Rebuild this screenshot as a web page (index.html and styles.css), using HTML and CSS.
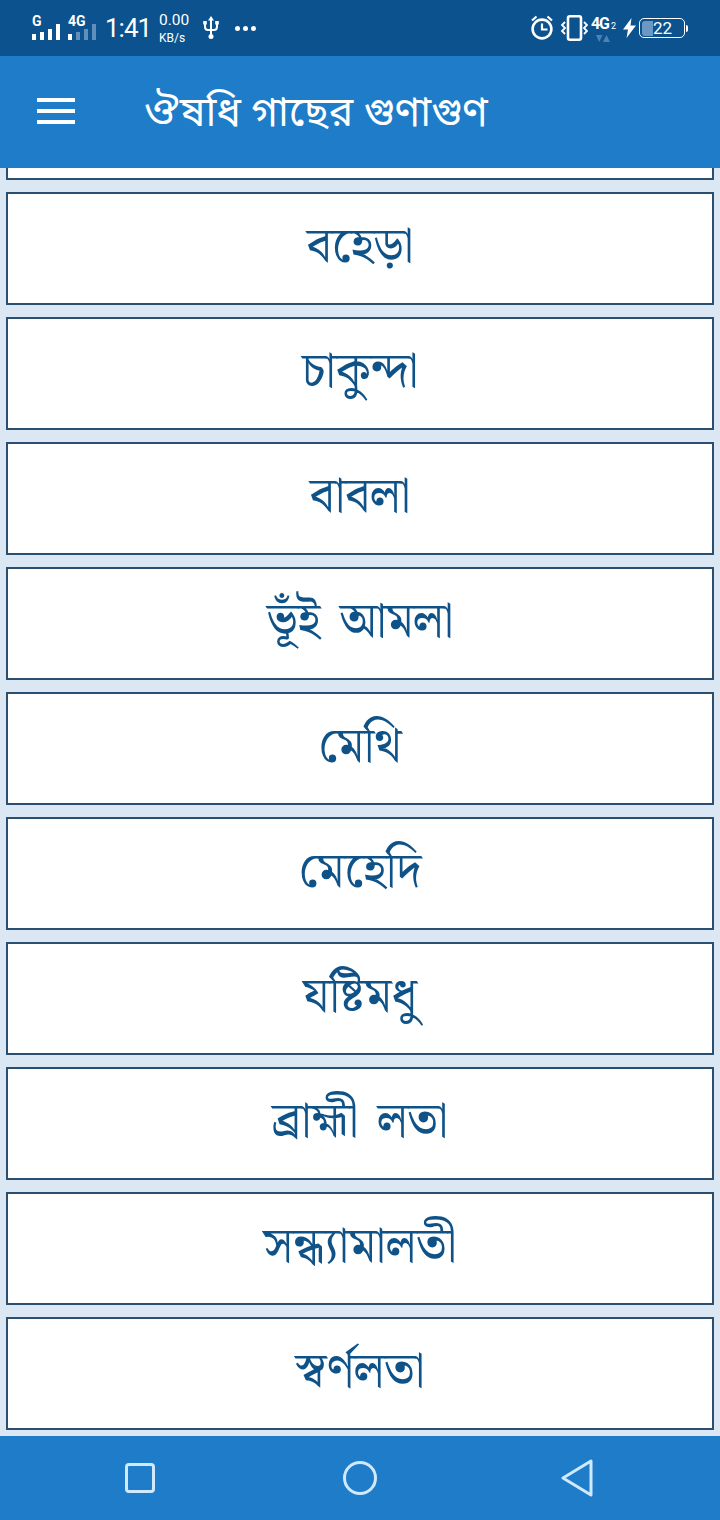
FILE: index.html
```html
<!DOCTYPE html>
<html lang="bn">
<head>
<meta charset="utf-8">
<title>ঔষধি গাছের গুণাগুণ</title>
<link rel="stylesheet" href="styles.css">
</head>
<body>
<div class="app">
  <header class="status">
    <div class="status-left">
      <div class="sim">
        <span class="net">G</span>
        <div class="bars"><i class="b1"></i><i class="b2"></i><i class="b3"></i><i class="b4"></i></div>
      </div>
      <div class="sim">
        <span class="net">4G</span>
        <div class="bars"><i class="b1"></i><i class="b2 dim"></i><i class="b3 dim"></i><i class="b4 dim"></i></div>
      </div>
      <span class="clock">1:41</span>
      <div class="speed"><span class="speed-val">0.00</span><span class="speed-unit">KB/s</span></div>
      <svg class="usb" width="18" height="24" viewBox="0 0 18 24" fill="none" stroke="#fff" stroke-width="2">
        <path d="M9 3v17M3 8v2.500q0 3.500 3 3.500h6q3 0 3-3.500V8"/>
        <path d="M9 0l3 4.500H6z" fill="#fff" stroke="none"/>
        <circle cx="9" cy="20.500" r="2.500" fill="#fff" stroke="none"/>
        <rect x="1.200" y="5" width="3.600" height="3.500" fill="#fff" stroke="none"/>
        <rect x="13.200" y="5" width="3.600" height="3.500" fill="#fff" stroke="none"/>
      </svg>
      <div class="dots"><i></i><i></i><i></i></div>
    </div>
    <div class="status-right">
      <svg class="alarm" width="26" height="26" viewBox="0 0 26 26" fill="none" stroke="#fff" stroke-width="2.600">
        <circle cx="13" cy="14" r="9.400"/>
        <path d="M13 8.500v6h5.500" stroke-width="2.200"/>
        <path d="M3 5.500L7.500 1.500M23 5.500L18.500 1.500" stroke-width="2.200"/>
      </svg>
      <svg class="vibrate" width="28" height="26" viewBox="0 0 28 26" fill="none" stroke="#fff" stroke-width="2.600">
        <rect x="8" y="1.300" width="13" height="23.400" rx="2"/>
        <path d="M5 7L2 10l3 3-3 3 3 3M24 7l3 3-3 3 3 3-3 3" stroke-width="1.800"/>
      </svg>
      <div class="net2">
        <span class="net2-label">4G<small>2</small></span>
        <svg width="14" height="7" viewBox="0 0 14 7"><path d="M0 0h6.500L3.200 7z" fill="#4f82b2"/><path d="M7 7h7L10.500 0z" fill="#4f82b2"/></svg>
      </div>
      <svg class="bolt" width="13" height="20" viewBox="0 0 13 20"><path d="M8.500 0L0 11.500h5L3.500 20 13 7.500H7.500z" fill="#fff"/></svg>
      <div class="battery">
        <div class="battery-body"><i class="battery-fill"></i><span class="battery-num">22</span></div>
        <i class="battery-tip"></i>
      </div>
    </div>
  </header>
  <div class="appbar">
    <div class="menu"><i></i><i></i><i></i></div>
    <h1 class="title">ঔষধি গাছের গুণাগুণ</h1>
  </div>
  <main class="list">
    <div class="item"></div>
    <div class="item">বহেড়া</div>
    <div class="item">চাকুন্দা</div>
    <div class="item">বাবলা</div>
    <div class="item">ভূঁই আমলা</div>
    <div class="item">মেথি</div>
    <div class="item">মেহেদি</div>
    <div class="item">যষ্টিমধু</div>
    <div class="item">ব্রাহ্মী লতা</div>
    <div class="item">সন্ধ্যামালতী</div>
    <div class="item">স্বর্ণলতা</div>
  </main>
  <nav class="navbar">
    <svg width="30" height="30" viewBox="0 0 30 30" fill="none" stroke="#cfeaff" stroke-width="3"><rect x="1.500" y="1.500" width="27" height="27" rx="2.500"/></svg>
    <svg width="36" height="36" viewBox="0 0 36 36" fill="none" stroke="#cfeaff" stroke-width="3"><circle cx="18" cy="18" r="15.500"/></svg>
    <svg width="32" height="38" viewBox="0 0 32 38" fill="none" stroke="#cfeaff" stroke-width="3" stroke-linejoin="round"><path d="M30 2v34L2 19z"/></svg>
  </nav>
</div>
</body>
</html>
```
FILE: styles.css
```css
* { box-sizing: border-box; }
html, body { margin: 0; padding: 0; }
body { font-family: "Liberation Sans", Roboto, sans-serif; }
.app { width: 720px; height: 1520px; display: flex; flex-direction: column; background: #dbe7f2; overflow: hidden; }

.status { height: 56px; flex: none; background: #0b528e; color: #fff; display: flex; justify-content: space-between; align-items: center; padding: 0 32px; font-family: Roboto, "Liberation Sans", sans-serif; }
.status-left, .status-right { display: flex; align-items: center; }
.sim { position: relative; width: 32px; height: 26px; margin: 0 4px 2px 0; }
.net { position: absolute; left: 0; top: 0; font-size: 14px; line-height: 14px; font-weight: 700; }
.bars { position: absolute; left: 0; bottom: 0; display: flex; align-items: flex-end; gap: 4px; }
.bars i { display: block; width: 4px; background: #fff; }
.bars .dim { background: #5f8fba; }
.b1 { height: 6px; } .b2 { height: 8px; } .b3 { height: 11px; } .b4 { height: 16px; }
.clock { font-size: 26px; line-height: 30px; letter-spacing: -1px; margin-left: 1px; width: 52px; }
.speed { display: flex; flex-direction: column; align-items: flex-start; margin-left: 2px; width: 43px; }
.speed-val { font-size: 15.500px; line-height: 20px; }
.speed-unit { font-size: 12px; line-height: 17px; }
.usb { margin-right: 15px; }
.dots { display: flex; gap: 3px; }
.dots i { display: block; width: 5px; height: 5px; border-radius: 50%; background: #fff; }

.alarm { margin-right: 5px; }
.vibrate { margin-right: 2px; }
.net2 { display: flex; flex-direction: column; align-items: center; width: 26px; margin-right: 7px; }
.net2-label { font-size: 16px; line-height: 17px; font-weight: 700; letter-spacing: -1px; }
.net2-label small { font-size: 9px; margin-left: 2px; font-weight: 400; }
.bolt { margin-right: 3px; }
.battery { display: flex; align-items: center; }
.battery-body { position: relative; width: 46px; height: 20px; border: 1.500px solid #fff; border-radius: 5px; display: flex; align-items: center; justify-content: flex-end; padding-right: 12px; }
.battery-fill { position: absolute; left: 1.500px; top: 1.500px; bottom: 1.500px; width: 11px; background: #6b97c2; border-radius: 3px 0 0 3px; }
.battery-num { position: relative; font-size: 17px; line-height: 17px; }
.battery-tip { display: block; width: 2px; height: 7px; margin-left: 1px; background: #fff; border-radius: 0 2px 2px 0; }

.appbar { height: 112px; flex: none; background: #1e7cc8; color: #fff; display: flex; align-items: center; padding-left: 37px; position: relative; z-index: 1; }
.menu { width: 38px; display: flex; flex-direction: column; gap: 7px; margin: 0 69px 2px 0; }
.menu i { display: block; height: 4px; background: #fff; }
.title { margin: 0 0 4px; font-size: 41px; font-weight: 400; line-height: 1; white-space: nowrap; font-family: "Noto Sans", "Noto Sans Bengali", "Lohit Bengali", sans-serif; }

.list { flex: 1; min-height: 0; overflow: hidden; display: flex; flex-direction: column; justify-content: flex-end; gap: 12px; padding: 0 6px 6px; }
.item { flex: none; height: 113px; padding-bottom: 6px; background: #fff; border: 2px solid #2a4f70; display: flex; align-items: center; justify-content: center; color: #0f5288; font-size: 49px; line-height: 1; word-spacing: 7px; font-family: "Liberation Serif", "Noto Serif Bengali", serif; }

.navbar { height: 84px; flex: none; background: #1e7cc8; display: flex; align-items: center; }
.navbar svg:nth-child(1) { margin-left: 125px; }
.navbar svg:nth-child(2) { margin-left: 187px; }
.navbar svg:nth-child(3) { margin-left: 183px; }
```
